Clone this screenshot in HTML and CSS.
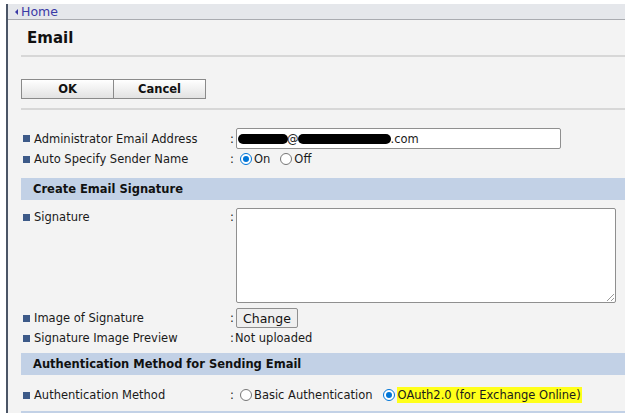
FILE: index.html
```html
<!DOCTYPE html>
<html lang="en">
<head>
<meta charset="utf-8">
<title>Email</title>
<link rel="stylesheet" href="styles.css">
</head>
<body>
<div class="frame">
  <div class="crumb"><span class="crumb-arrow"></span><a href="#">Home</a></div>
  <div class="content">
    <h1 class="title">Email</h1>
    <div class="actions">
      <button class="btn btn-main">OK</button><button class="btn btn-main">Cancel</button>
    </div>
    <div class="rows rows-first">
      <div class="row">
        <div class="label">Administrator Email Address</div>
        <div class="colon">:</div>
        <div class="value"><div class="textbox"><span class="mask mask-a"></span><span class="at">@</span><span class="mask mask-b"></span>.com</div></div>
      </div>
      <div class="row">
        <div class="label">Auto Specify Sender Name</div>
        <div class="colon">:</div>
        <div class="value radios">
          <label class="radio"><span class="dot on"></span>On</label>
          <label class="radio"><span class="dot"></span>Off</label>
        </div>
      </div>
    </div>
    <div class="section">Create Email Signature</div>
    <div class="rows">
      <div class="row row-tall">
        <div class="label">Signature</div>
        <div class="colon">:</div>
        <div class="value"><div class="textarea"><span class="grip"></span></div></div>
      </div>
      <div class="row row-spaced">
        <div class="label">Image of Signature</div>
        <div class="colon">:</div>
        <div class="value"><button class="btn-change">Change</button></div>
      </div>
      <div class="row">
        <div class="label">Signature Image Preview</div>
        <div class="colon colon-tight">:</div>
        <div class="value">Not uploaded</div>
      </div>
    </div>
    <div class="section section-auth">Authentication Method for Sending Email</div>
    <div class="rows rows-auth">
      <div class="row">
        <div class="label">Authentication Method</div>
        <div class="colon">:</div>
        <div class="value radios">
          <label class="radio"><span class="dot"></span>Basic Authentication</label>
          <label class="radio"><span class="dot on"></span><span class="mark">OAuth2.0 (for Exchange Online)</span></label>
        </div>
      </div>
    </div>
    <div class="section"></div>
  </div>
</div>
</body>
</html>
```
FILE: styles.css
```css
* { box-sizing: border-box; }
html, body { margin: 0; padding: 0; background: #ffffff; }
body {
  font-family: "DejaVu Sans", Verdana, sans-serif;
  font-size: 11.5px;
  color: #1a1a1a;
  overflow: hidden;
  height: 100vh;
}
.frame {
  margin: 4px 0 0 6px;
  border-left: 2px solid #4b5566;
  background: #f3f3f3;
  height: calc(100vh - 4px);
  overflow: hidden;
}
.crumb {
  height: 16px;
  background: #e5e7eb;
  border-bottom: 1px solid #a9abb0;
  display: flex;
  align-items: center;
  padding-left: 7px;
  font-size: 12.5px;
}
.crumb a { color: #3a3aa6; text-decoration: none; }
.crumb-arrow {
  width: 0; height: 0;
  border-top: 3px solid transparent;
  border-bottom: 3px solid transparent;
  border-right: 3px solid #3a3aa6;
  margin-right: 3px;
}
.content { padding-left: 13px; }
.title {
  margin: 0;
  padding: 9px 0 0 6px;
  height: 37px;
  font-size: 15px;
  font-weight: bold;
  color: #111;
  border-bottom: 2px solid #d7d7d7;
}
.actions {
  margin-top: 22px;
  display: flex;
  padding-bottom: 9px;
  border-bottom: 2px solid #d7d7d7;
}
.btn-main {
  width: 93px;
  height: 20px;
  border: 1px solid #8a8a8a;
  background: linear-gradient(#ffffff, #e2e2e2);
  font-family: inherit;
  font-size: 11.5px;
  font-weight: bold;
  color: #111;
  padding: 0;
}
.btn-main + .btn-main { margin-left: -1px; }
.rows { display: flex; flex-direction: column; }
.rows-first { padding-top: 18px; padding-bottom: 3px; }
.row {
  display: flex;
  align-items: center;
  min-height: 20px;
  padding-left: 2px;
}
.row-tall { align-items: flex-start; padding-top: 2px; }
.row-tall .label, .row-tall .colon { padding-top: 2px; }
.row-spaced { margin-top: 5px; }
.label {
  width: 207px;
  display: flex;
  align-items: center;
}
.label::before {
  content: "";
  width: 7px; height: 7px;
  background: #3d5a88;
  margin-right: 4px;
}
.colon { width: 6px; }
.colon-tight { width: 5px; }
.value { display: flex; align-items: center; }
.textbox {
  width: 325px;
  height: 21px;
  background: #fff;
  border: 1px solid #8f8f8f;
  border-radius: 2px;
  display: flex;
  align-items: center;
  padding-left: 1px;
  font-size: 11.5px;
}
.mask { display: inline-block; height: 10px; background: #000; border-radius: 5px; }
.mask-a { width: 50px; }
.mask-b { width: 93px; }
.at { margin: 0 -1px; }
.radios { gap: 6px; }
.radio { display: flex; align-items: center; }
.dot {
  width: 12px; height: 12px;
  border: 1px solid #767676;
  border-radius: 50%;
  background: #fff;
  margin: 0 2px 0 4px;
  position: relative;
}
.dot.on { border-color: #0075d7; }
.dot.on::after {
  content: "";
  position: absolute;
  left: 2px; top: 2px;
  width: 6px; height: 6px;
  border-radius: 50%;
  background: #0075d7;
}
.mark { background: #ffff1a; padding: 1px 1px; }
.section {
  height: 22px;
  background: #c2d1e6;
  margin: 6px 0;
  display: flex;
  align-items: center;
  padding-left: 12px;
  font-weight: bold;
  font-size: 11.5px;
  color: #111;
}
.section-auth { margin-top: 5px; }
.rows-auth { margin-top: 10px; }
.textarea {
  width: 380px;
  height: 95px;
  background: #fff;
  border: 1px solid #8f8f8f;
  border-radius: 2px;
  position: relative;
}
.grip {
  position: absolute;
  right: 1px; bottom: 1px;
  width: 7px; height: 7px;
  background: linear-gradient(135deg, transparent 45%, #999 45%, #999 55%, transparent 55%, transparent 75%, #999 75%, #999 85%, transparent 85%);
}
.btn-change {
  height: 20px;
  padding: 0 6px;
  border: 1px solid #8f8f8f;
  border-radius: 2px;
  background: #efefef;
  font-family: inherit;
  font-size: 12.5px;
  color: #111;
}
```
